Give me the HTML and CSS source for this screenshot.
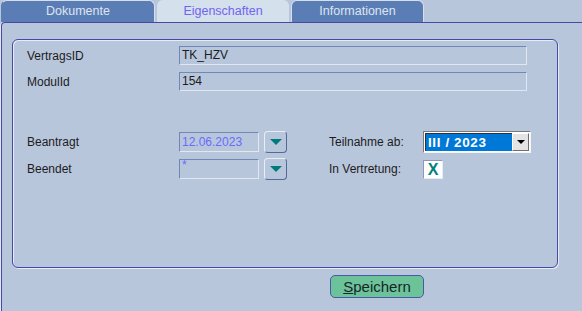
FILE: index.html
```html
<!DOCTYPE html>
<html lang="de">

<head>
  <meta charset="UTF-8">
  <meta name="viewport" content="width=device-width, initial-scale=1.0">
  <title>Eigenschaften</title>

  <link rel="stylesheet" href="styles.css">
</head>

<body>
  <div class="tabs">
    <div class="tab">Dokumente</div>
    <div class="tab active">Eigenschaften</div>
    <div class="tab last">Informationen</div>
  </div>

  <div class="panel">
    <div class="group">
      <div class="rows">
        <div class="row">
          <span class="label">VertragsID</span>
          <div class="field wide">TK_HZV</div>
        </div>
        <div class="row">
          <span class="label">ModulId</span>
          <div class="field wide">154</div>
        </div>
      </div>

      <div class="rows dates">
        <div class="row tall">
          <span class="label">Beantragt</span>
          <div class="field date">12.06.2023</div>
          <button class="drop"><span class="tri"></span></button>
          <span class="label second">Teilnahme ab:</span>
          <div class="select">
            <span class="value">III / 2023</span>
            <span class="arrow"><span class="tri small"></span></span>
          </div>
        </div>
        <div class="row tall">
          <span class="label">Beendet</span>
          <div class="field date empty">*</div>
          <button class="drop"><span class="tri"></span></button>
          <span class="label second">In Vertretung:</span>
          <div class="check">X</div>
        </div>
      </div>
    </div>

    <div class="actions">
      <button class="save"><u>S</u>peichern</button>
    </div>
  </div>
</body>

</html>
```

FILE: styles.css
```css
* {
  margin: 0;
  padding: 0;
  box-sizing: border-box;
}

body {
  font-family: 'Liberation Sans', Arial, sans-serif;
  font-size: 12px;
  background: #b8c6dc;
  color: #1c1c1c;
  width: 582px;
  height: 311px;
  overflow: hidden;
}

/* Reiter oben */
.tabs {
  display: flex;
  gap: 2px;
  height: 22px;
  padding-left: 1px;
}

.tab {
  width: 132px;
  height: 22px;
  background: #5b7db5;
  color: #dde5f1;
  font-size: 12.5px;
  text-align: center;
  line-height: 21px;
  border-radius: 6px 6px 0 0;
  border: 1px solid #d6e0ec;
  border-bottom: none;
}

.tab:first-child {
  width: 154px;
  border-left-color: #5b7db5;
}

.tab.last {
  width: 133px;
}

.tab.active {
  background: #d4e0ec;
  color: #7164f0;
}

.panel {
  border-top: 1px solid #4848a8;
  border-left: 1px solid #4848a8;
  border-top-left-radius: 4px;
  margin-left: 1px;
  box-shadow: -1px 0 0 #e2e9f3;
  height: 289px;
  padding: 16px 0 0 10px;
}

/* Gruppenrahmen */
.group {
  width: 546px;
  height: 229px;
  border: 1px solid #4848a8;
  border-radius: 6px;
  box-shadow: 1px 1px 0 #e6ecf5, inset 1px 1px 0 #e6ecf5;
  padding: 6px 0 0 14px;
}

.rows {
  display: flex;
  flex-direction: column;
  gap: 7px;
}

.rows.dates {
  gap: 3px;
  margin-top: 39px;
}

.row {
  display: flex;
  align-items: center;
  height: 19px;
}

.row.tall {
  height: 24px;
}

.label {
  width: 152px;
}

.label.second {
  width: 94px;
  margin-left: 42px;
}

.field {
  height: 19px;
  border: 1px solid;
  border-color: #7088b6 #e0e7f1 #e0e7f1 #7088b6;
  padding: 0 2px;
  line-height: 17px;
}

.field.wide {
  width: 348px;
}

.field.date {
  width: 80px;
  height: 20px;
  color: #6a6aff;
  line-height: 18px;
}

.field.empty {
  line-height: 10px;
}

.drop {
  width: 23px;
  height: 22px;
  margin-left: 5px;
  background: #b8c6dc;
  border: 1px solid;
  border-color: #e8eef6 #56689a #56689a #e8eef6;
  border-radius: 4px;
  display: flex;
  align-items: center;
  justify-content: center;
}

.tri {
  width: 0;
  height: 0;
  border-left: 6px solid transparent;
  border-right: 6px solid transparent;
  border-top: 6px solid #007a7a;
}

.tri.small {
  border-left-width: 4px;
  border-right-width: 4px;
  border-top: 4px solid #000;
}

.select {
  width: 108px;
  height: 22px;
  border: 1px solid;
  border-color: #7a7a7a #f4f6fa #f4f6fa #7a7a7a;
  padding: 1px;
  display: flex;
  background: #fff;
}

.select .value {
  flex: 1;
  background: #0078d7;
  color: #fff;
  font-weight: bold;
  font-size: 13.5px;
  letter-spacing: 0.6px;
  line-height: 18px;
  padding-left: 2px;
  border-top: 1px solid #333;
  border-left: 1px solid #333;
}

.select .arrow {
  width: 17px;
  background: #e4e4e4;
  border: 1px solid;
  border-color: #fff #6e6e6e #6e6e6e #fff;
  display: flex;
  align-items: center;
  justify-content: center;
}

.check {
  width: 20px;
  height: 19px;
  background: #fff;
  border: 1px solid;
  border-color: #8a9ab8 #e6ecf5 #e6ecf5 #8a9ab8;
  color: #008080;
  font-weight: bold;
  font-size: 16px;
  line-height: 17px;
  text-align: center;
}

/* Speichern */
.actions {
  padding: 7px 0 0 318px;
}

.save {
  width: 94px;
  height: 23px;
  background: #6cc39a;
  border: 1px solid #4a58aa;
  border-radius: 5px;
  font-family: 'Liberation Sans', Arial, sans-serif;
  font-size: 15px;
  color: #16262a;
  line-height: 20px;
}
```
